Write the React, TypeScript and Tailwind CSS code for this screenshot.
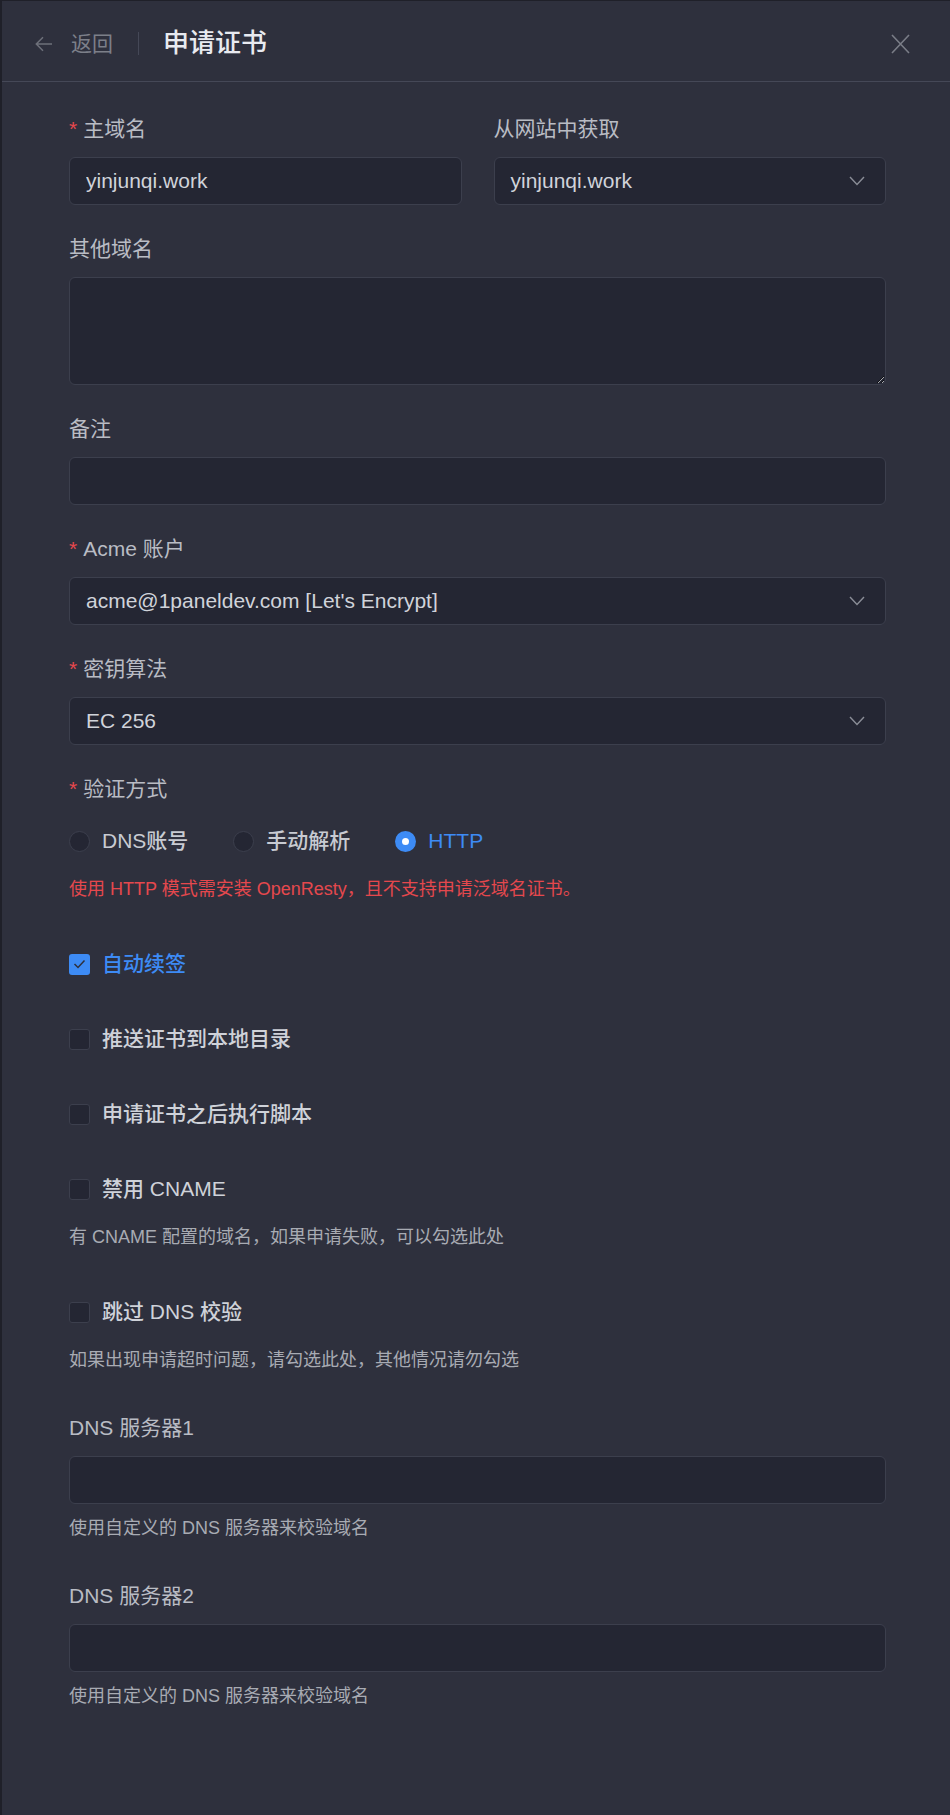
import React from "react"

const font = "font-['Liberation_Sans','Noto_Sans_CJK_SC',sans-serif]"

function Chevron() {
    return (
        <svg width="16" height="10" viewBox="0 0 16 10" fill="none" className="shrink-0">
            <polyline points="1,1 8,8.5 15,1" stroke="#8a8d97" strokeWidth="1.4" />
        </svg>
    )
}

function Label({ required, children }: { required?: boolean; children: React.ReactNode }) {
    return (
        <div className="h-[33px] mb-3 flex items-center text-[21px] leading-[33px] text-[#b9bcc4]">
            {required && <span className="text-[#e5484d] mr-[6px]">*</span>}
            {children}
        </div>
    )
}

function TextInput({ value }: { value?: string }) {
    return (
        <input
            defaultValue={value}
            className="block w-full h-[48px] rounded-[6px] border border-[#3c3f4d] bg-[#242633] px-4 text-[21px] text-[#d0d3da] outline-none"
        />
    )
}

function Select({ value }: { value: string }) {
    return (
        <div className="w-full h-[48px] rounded-[6px] border border-[#3c3f4d] bg-[#242633] pl-4 pr-5 flex items-center justify-between text-[21px] text-[#d0d3da]">
            <span>{value}</span>
            <Chevron />
        </div>
    )
}

function Radio({ label, checked }: { label: string; checked?: boolean }) {
    return (
        <div className="flex items-center mr-[45px]">
            {checked ? (
                <span className="w-[21px] h-[21px] rounded-full bg-[#3d8bf5] flex items-center justify-center">
                    <span className="w-[7px] h-[7px] rounded-full bg-white" />
                </span>
            ) : (
                <span className="w-[21px] h-[21px] rounded-full border border-[#3c3f4d] bg-[#242633]" />
            )}
            <span className={`ml-3 text-[21px] font-medium ${checked ? "text-[#3d8bf5]" : "text-[#c8cbd2]"}`}>{label}</span>
        </div>
    )
}

function Checkbox({ label, checked }: { label: string; checked?: boolean }) {
    return (
        <div className="h-[48px] flex items-center">
            {checked ? (
                <span className="w-[21px] h-[21px] rounded-[3px] bg-[#3d8bf5] flex items-center justify-center">
                    <svg width="13" height="10" viewBox="0 0 13 10" fill="none">
                        <polyline points="1.5,5 5,8.5 11.5,1.5" stroke="#2e303d" strokeWidth="1.5" />
                    </svg>
                </span>
            ) : (
                <span className="w-[21px] h-[21px] rounded-[3px] border border-[#3c3f4d] bg-[#242633]" />
            )}
            <span className={`ml-3 text-[21px] font-medium ${checked ? "text-[#3d8bf5]" : "text-[#cfd2d9]"}`}>{label}</span>
        </div>
    )
}

function Help({ children }: { children: React.ReactNode }) {
    return <div className="h-[48px] leading-[48px] text-[18px] text-[#a8abb3]">{children}</div>
}

export default function App() {
    return (
        <div className={`min-h-screen bg-[#2e303d] border-l-2 border-t border-[#1f2029] ${font}`}>
            {/* Header */}
            <header className="h-[81px] border-b border-[#454857] flex items-center pt-[5px] pl-[33px] pr-[40px]">
                <svg width="18" height="18" viewBox="0 0 18 18" fill="none">
                    <path d="M17 9H1.5M8 2.2L1.3 9l6.7 6.8" stroke="#6d707a" strokeWidth="1.5" />
                </svg>
                <span className="ml-[18px] text-[21px] text-[#7c7f89]">返回</span>
                <span className="ml-[25px] w-px h-[23px] bg-[#454857]" />
                <span className="ml-[24px] text-[26px] font-medium text-[#e8eaf0]">申请证书</span>
                <div className="flex-1" />
                <svg width="19" height="20" viewBox="0 0 19 20" fill="none">
                    <path d="M1 1L18 19M18 1L1 19" stroke="#7a7d87" strokeWidth="1.6" />
                </svg>
            </header>

            {/* Form */}
            <div className="pl-[67px] pr-[64px] pt-[30px] pb-[90px]">
                <div className="grid grid-cols-2 gap-x-[32px] mb-[27px]">
                    <div>
                        <Label required>主域名</Label>
                        <TextInput value="yinjunqi.work" />
                    </div>
                    <div>
                        <Label>从网站中获取</Label>
                        <Select value="yinjunqi.work" />
                    </div>
                </div>

                <div className="mb-[27px]">
                    <Label>其他域名</Label>
                    <textarea className="block w-full h-[108px] rounded-[6px] border border-[#3c3f4d] bg-[#242633] px-4 py-2 text-[21px] text-[#d0d3da] outline-none resize-y" />
                </div>

                <div className="mb-[27px]">
                    <Label>备注</Label>
                    <TextInput />
                </div>

                <div className="mb-[27px]">
                    <Label required>Acme 账户</Label>
                    <Select value="acme@1paneldev.com [Let's Encrypt]" />
                </div>

                <div className="mb-[27px]">
                    <Label required>密钥算法</Label>
                    <Select value="EC 256" />
                </div>

                <div className="mb-[27px]">
                    <Label required>验证方式</Label>
                    <div className="h-[48px] flex items-center">
                        <Radio label="DNS账号" />
                        <Radio label="手动解析" />
                        <Radio label="HTTP" checked />
                    </div>
                    <div className="h-[48px] leading-[48px] text-[18px] text-[#e5484d]">
                        使用 HTTP 模式需安装 OpenResty，且不支持申请泛域名证书。
                    </div>
                </div>

                <div className="mb-[27px]">
                    <Checkbox label="自动续签" checked />
                </div>
                <div className="mb-[27px]">
                    <Checkbox label="推送证书到本地目录" />
                </div>
                <div className="mb-[27px]">
                    <Checkbox label="申请证书之后执行脚本" />
                </div>
                <div className="mb-[27px]">
                    <Checkbox label="禁用 CNAME" />
                    <Help>有 CNAME 配置的域名，如果申请失败，可以勾选此处</Help>
                </div>
                <div className="mb-[27px]">
                    <Checkbox label="跳过 DNS 校验" />
                    <Help>如果出现申请超时问题，请勾选此处，其他情况请勿勾选</Help>
                </div>

                <div className="mb-[27px]">
                    <Label>DNS 服务器1</Label>
                    <TextInput />
                    <Help>使用自定义的 DNS 服务器来校验域名</Help>
                </div>
                <div>
                    <Label>DNS 服务器2</Label>
                    <TextInput />
                    <Help>使用自定义的 DNS 服务器来校验域名</Help>
                </div>
            </div>
        </div>
    )
}
